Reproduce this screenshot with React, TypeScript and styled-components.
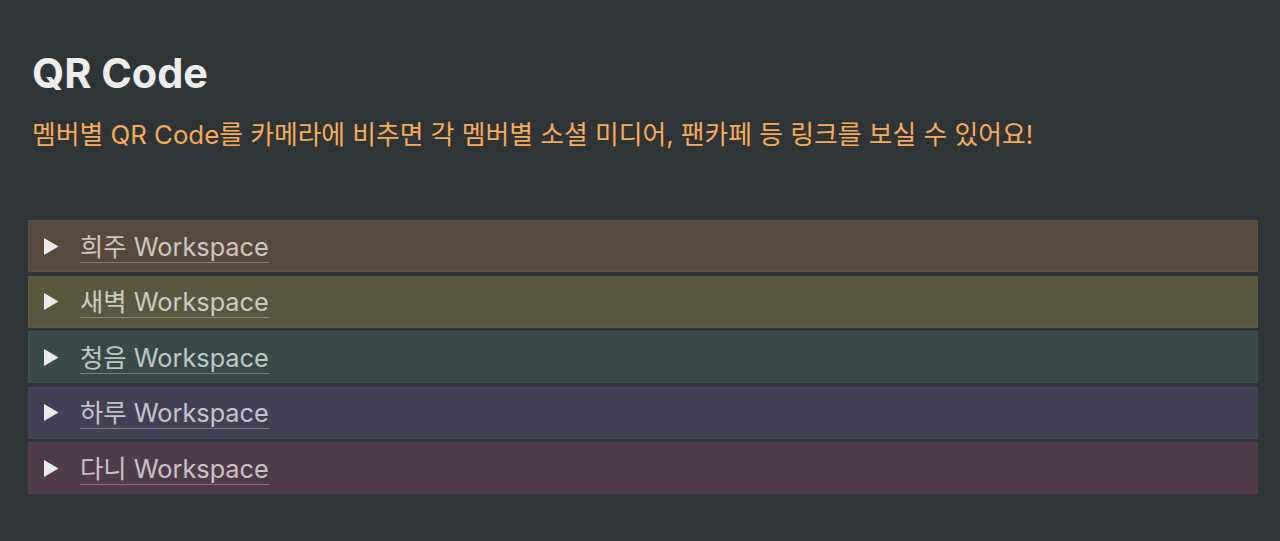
import React from 'react';
import styled, { createGlobalStyle } from 'styled-components';

const workspaces = [
	{ name: '희주', tone: 'brown' },
	{ name: '새벽', tone: 'olive' },
	{ name: '청음', tone: 'teal' },
	{ name: '하루', tone: 'purple' },
	{ name: '다니', tone: 'pink' },
] as const;

type Tone = (typeof workspaces)[number]['tone'];

const TONES: Record<Tone, string> = {
	brown: '#574a3d',
	olive: '#59573e',
	teal: '#384a48',
	purple: '#433f56',
	pink: '#4f3b4a',
};

const GlobalStyle = createGlobalStyle`
	html, body {
		margin: 0;
		padding: 0;
		background: #2f3437;
	}
	body {
		font-family: Inter, "Noto Sans CJK KR", sans-serif;
		-webkit-font-smoothing: antialiased;
	}
`;

const App = (): JSX.Element => (
	<>
		<GlobalStyle />
		<Page>
			<Title>QR Code</Title>
			<Subtitle>
				멤버별 QR Code를 카메라에 비추면 각 멤버별 소셜 미디어, 팬카페 등 링크를 보실 수 있어요!
			</Subtitle>
			<ToggleList>
				{workspaces.map((w) => (
					<Toggle key={w.name} tone={w.tone}>
						<Arrow viewBox="0 0 16 19" aria-hidden>
							<polygon points="1,1 15.5,9.5 1,18" />
						</Arrow>
						<Label>{`${w.name} Workspace`}</Label>
					</Toggle>
				))}
			</ToggleList>
		</Page>
	</>
);

const Page = styled.main`
	display: flex;
	flex-direction: column;
	min-height: 541px;
	box-sizing: border-box;
	padding: 49px 22px 0 28px;
`;

const Title = styled.h1`
	margin: 0 0 0 4px;
	font-size: 41.4px;
	line-height: 48px;
	font-weight: 700;
	color: #ededed;
`;

const Subtitle = styled.p`
	margin: 20px 0 0 4px;
	font-size: 25.8px;
	line-height: 36px;
	color: #f6aa5b;
`;

const ToggleList = styled.div`
	display: flex;
	flex-direction: column;
	gap: 3.5px;
	margin-top: 67px;
`;

const Toggle = styled.div<{ tone: Tone }>`
	display: flex;
	align-items: center;
	height: 52px;
	box-sizing: border-box;
	padding: 2px 0 0 15px;
	background: ${(p) => TONES[p.tone]};
	box-shadow: inset 0 0 0 1px rgba(255, 255, 255, 0.03);
`;

const Arrow = styled.svg`
	width: 16px;
	height: 19px;
	margin-top: -2px;
	fill: #ececec;
	flex-shrink: 0;
`;

const Label = styled.span`
	margin-left: 21px;
	font-size: 25.3px;
	line-height: 30px;
	color: rgba(255, 255, 255, 0.7);
	border-bottom: 1px solid rgba(255, 255, 255, 0.28);
`;

export default App;
